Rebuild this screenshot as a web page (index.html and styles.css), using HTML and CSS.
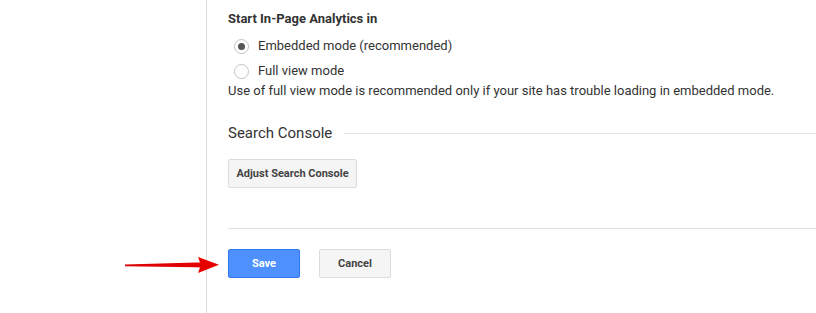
FILE: index.html
```html
<!DOCTYPE html>
<html>
<head>
<meta charset="utf-8">
<link rel="stylesheet" href="styles.css">
</head>
<body>
<div class="page">
  <aside class="sidebar"></aside>
  <main class="main">
    <div class="label">Start In-Page Analytics in</div>
    <div class="options">
      <label class="option"><span class="radio checked"></span>Embedded mode (recommended)</label>
      <label class="option"><span class="radio"></span>Full view mode</label>
    </div>
    <p class="desc">Use of full view mode is recommended only if your site has trouble loading in embedded mode.</p>
    <div class="section-title"><span>Search Console</span><span class="rule"></span></div>
    <div class="adjust-row"><button class="btn btn-grey">Adjust Search Console</button></div>
    <div class="divider"></div>
    <div class="actions">
      <button class="btn btn-blue">Save</button>
      <button class="btn btn-grey btn-cancel">Cancel</button>
    </div>
  </main>
  <svg class="arrow" width="100" height="24" viewBox="0 0 100 24">
    <defs>
      <linearGradient id="ag" x1="0" x2="1" y1="0" y2="0">
        <stop offset="0" stop-color="#d80000"/>
        <stop offset="1" stop-color="#e80000"/>
      </linearGradient>
    </defs>
    <path d="M1 11.5 L72 9.6 L76 9.4 L74 4 L95 11.8 L74 20 L76 14.4 L72 14.2 L1 13.2 Z" fill="url(#ag)"/>
  </svg>
</div>
</body>
</html>
```
FILE: styles.css
```css
html, body {
  margin: 0;
  padding: 0;
  background: #fff;
}
body {
  font-family: Roboto, "Liberation Sans", Arial, sans-serif;
  color: #333;
  font-size: 13px;
}
.page {
  display: flex;
  height: 313px;
  position: relative;
  overflow: hidden;
}
.sidebar {
  width: 206px;
  flex: none;
  border-right: 1px solid #dcdcdc;
}
.main {
  flex: 1;
  padding-left: 21px;
  padding-top: 10px;
}
.label {
  font-weight: bold;
  line-height: 18px;
  color: #333;
}
.options {
  display: flex;
  flex-direction: column;
  gap: 7px;
  margin-top: 9px;
  padding-left: 7px;
}
.option {
  display: flex;
  align-items: center;
  gap: 9px;
  line-height: 18px;
  color: #333;
}
.radio {
  width: 15px;
  height: 15px;
  border: 1px solid #c4c4c4;
  border-radius: 50%;
  box-sizing: border-box;
  display: inline-flex;
  align-items: center;
  justify-content: center;
  background: #fff;
  margin-left: -1px;
}
.radio.checked::after {
  content: "";
  width: 7px;
  height: 7px;
  border-radius: 50%;
  background: #555;
}
.desc {
  margin: 2px 0 0;
  line-height: 18px;
  color: #333;
}
.section-title {
  display: flex;
  align-items: center;
  margin-top: 23px;
  font-size: 15px;
  color: #333;
  line-height: 20px;
}
.section-title .rule {
  flex: 1;
  height: 1px;
  background: #e2e2e2;
  margin-left: 12px;
}
.btn {
  font-family: Roboto, "Liberation Sans", Arial, sans-serif;
  font-size: 11px;
  font-weight: bold;
  border-radius: 2px;
  height: 29px;
  padding: 0 8px;
  cursor: pointer;
  display: inline-flex;
  align-items: center;
  justify-content: center;
  white-space: nowrap;
  box-sizing: border-box;
}
.btn-grey {
  background: #f5f5f5;
  border: 1px solid #dcdcdc;
  color: #444;
}
.adjust-row {
  display: flex;
  margin-top: 16px;
}
.adjust-row .btn {
  width: 129px;
}
.divider {
  height: 1px;
  background: #e0e0e0;
  margin-top: 40px;
}
.actions {
  display: flex;
  gap: 19px;
  margin-top: 20px;
}
.btn-blue {
  background: #4d90fe;
  border: 1px solid #3079ed;
  color: #fff;
  width: 72px;
}
.btn-cancel {
  width: 72px;
}
.arrow {
  position: absolute;
  left: 124px;
  top: 253px;
}
```
